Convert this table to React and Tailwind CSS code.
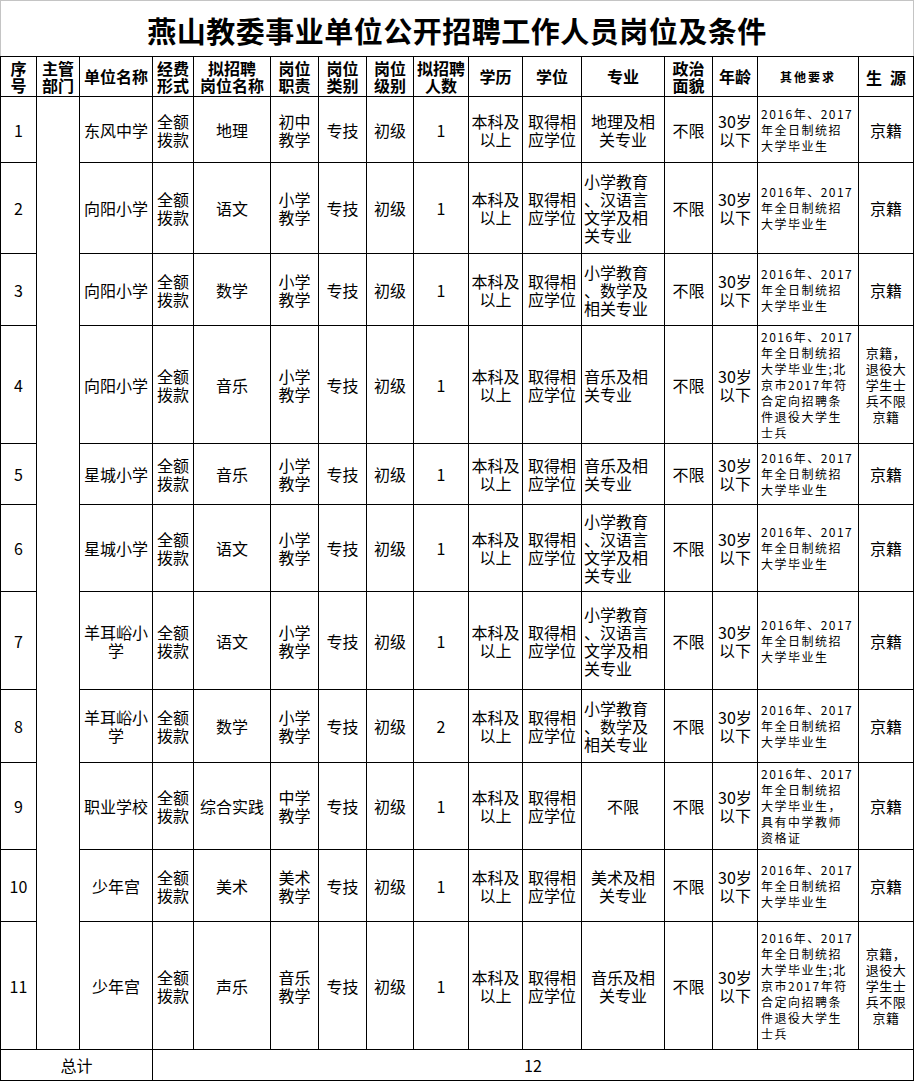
import React from 'react';

const STD = '2016年、2017\n年全日制统招\n大学毕业生';
const LONG = '2016年、2017\n年全日制统招\n大学毕业生;北\n京市2017年符\n合定向招聘条\n件退役大学生\n士兵';
const ZHIYE = '2016年、2017\n年全日制统招\n大学毕业生，\n具有中学教师\n资格证';
const TUIYI = '京籍，\n退役大\n学生士\n兵不限\n京籍';
const YUWEN = '小学教育\n、汉语言\n文学及相\n关专业';
const SHUXUE = '小学教育\n、数学及\n相关专业';

// 列宽，按截图量出来的像素
const cols = [36, 43, 73, 41, 77, 48, 48, 47, 55, 54, 59, 83, 48, 45, 101, 55];

const headers = [
  '序\n号', '主管\n部门', '单位名称', '经费\n形式', '拟招聘\n岗位名称', '岗位\n职责', '岗位\n类别',
  '岗位\n级别', '拟招聘\n人数', '学历', '学位', '专业', '政治\n面貌', '年龄',
];

const rows = [
  { h: 'h-[66px]', no: '1', unit: '东风中学', post: '地理', duty: '初中\n教学', num: '1', major: '地理及相\n关专业', mc: true, other: STD, src: '京籍' },
  { h: 'h-[91px]', no: '2', unit: '向阳小学', post: '语文', duty: '小学\n教学', num: '1', major: YUWEN, other: STD, src: '京籍' },
  { h: 'h-[72px]', no: '3', unit: '向阳小学', post: '数学', duty: '小学\n教学', num: '1', major: SHUXUE, other: STD, src: '京籍' },
  { h: 'h-[118px]', no: '4', unit: '向阳小学', post: '音乐', duty: '小学\n教学', num: '1', major: '音乐及相\n关专业', other: LONG, src: TUIYI },
  { h: 'h-[61px]', no: '5', unit: '星城小学', post: '音乐', duty: '小学\n教学', num: '1', major: '音乐及相\n关专业', other: STD, src: '京籍' },
  { h: 'h-[87px]', no: '6', unit: '星城小学', post: '语文', duty: '小学\n教学', num: '1', major: YUWEN, other: STD, src: '京籍' },
  { h: 'h-[98px]', no: '7', unit: '羊耳峪小\n学', post: '语文', duty: '小学\n教学', num: '1', major: YUWEN, other: STD, src: '京籍' },
  { h: 'h-[73px]', no: '8', unit: '羊耳峪小\n学', post: '数学', duty: '小学\n教学', num: '2', major: SHUXUE, other: STD, src: '京籍' },
  { h: 'h-[87px]', no: '9', unit: '职业学校', post: '综合实践', duty: '中学\n教学', num: '1', major: '不限', mc: true, other: ZHIYE, src: '京籍' },
  { h: 'h-[72px]', no: '10', unit: '少年宫', post: '美术', duty: '美术\n教学', num: '1', major: '美术及相\n关专业', mc: true, other: STD, src: '京籍' },
  { h: 'h-[128px]', no: '11', unit: '少年宫', post: '声乐', duty: '音乐\n教学', num: '1', major: '音乐及相\n关专业', mc: true, other: LONG, src: TUIYI },
];

const Lines = ({ text }) =>
  text.split('\n').map((t, i) => (
    <div key={i} className="whitespace-nowrap">{t}</div>
  ));

const td = 'border border-black p-0 align-middle text-center';

const App = () => {
  return (
    <div className="w-[916px] min-h-[1083px] bg-white text-black font-['Noto_Sans_CJK_SC',sans-serif]">
      {/* 标题 */}
      <div className="w-[914px] h-[56px] border border-b-0 border-[#c4c4c4] flex items-center justify-center pt-[4px]">
        <h1 className="text-[29px] font-bold leading-none tracking-[0.5px]">燕山教委事业单位公开招聘工作人员岗位及条件</h1>
      </div>

      <table className="table-fixed border-collapse w-[914px] text-[16px] leading-[18px]">
        <colgroup>
          {cols.map((w, i) => (
            <col key={i} style={{ width: w }} />
          ))}
        </colgroup>
        <thead>
          <tr className="h-[40px]">
            {headers.map((h, i) => (
              <th key={i} className={`${td} font-bold leading-[17px]`}>
                <Lines text={h} />
              </th>
            ))}
            <th className={`${td} font-bold text-[12px] tracking-[2px]`}>其他要求</th>
            <th className={`${td} font-bold whitespace-pre`}>{'生\u2002源'}</th>
          </tr>
        </thead>
        <tbody>
          {rows.map((r, idx) => (
            <tr key={idx} className={r.h}>
              <td className={td}>{r.no}</td>
              {idx === 0 && <td className={td} rowSpan={11}></td>}
              <td className={td}><Lines text={r.unit} /></td>
              <td className={td}><Lines text={'全额\n拨款'} /></td>
              <td className={td}><Lines text={r.post} /></td>
              <td className={td}><Lines text={r.duty} /></td>
              <td className={td}>专技</td>
              <td className={td}>初级</td>
              <td className={td}>{r.num}</td>
              <td className={td}><Lines text={'本科及\n以上'} /></td>
              <td className={td}><Lines text={'取得相\n应学位'} /></td>
              <td className={`${td} ${r.mc ? 'text-center' : 'text-left pl-[2px]'}`}>
                <Lines text={r.major} />
              </td>
              <td className={td}>不限</td>
              <td className={td}><Lines text={'30岁\n以下'} /></td>
              <td className={`${td} text-left pl-[3px] text-[12px] leading-[16px] tracking-[1.5px]`}>
                <Lines text={r.other} />
              </td>
              <td className={`${td} ${r.src === '京籍' ? '' : 'text-[13px] leading-[16px] tracking-[0.5px]'}`}>
                <Lines text={r.src} />
              </td>
            </tr>
          ))}
          <tr className="h-[31px]">
            <td className={td} colSpan={3}>总计</td>
            <td className={td} colSpan={13}>12</td>
          </tr>
        </tbody>
      </table>
    </div>
  );
};

export default App;
